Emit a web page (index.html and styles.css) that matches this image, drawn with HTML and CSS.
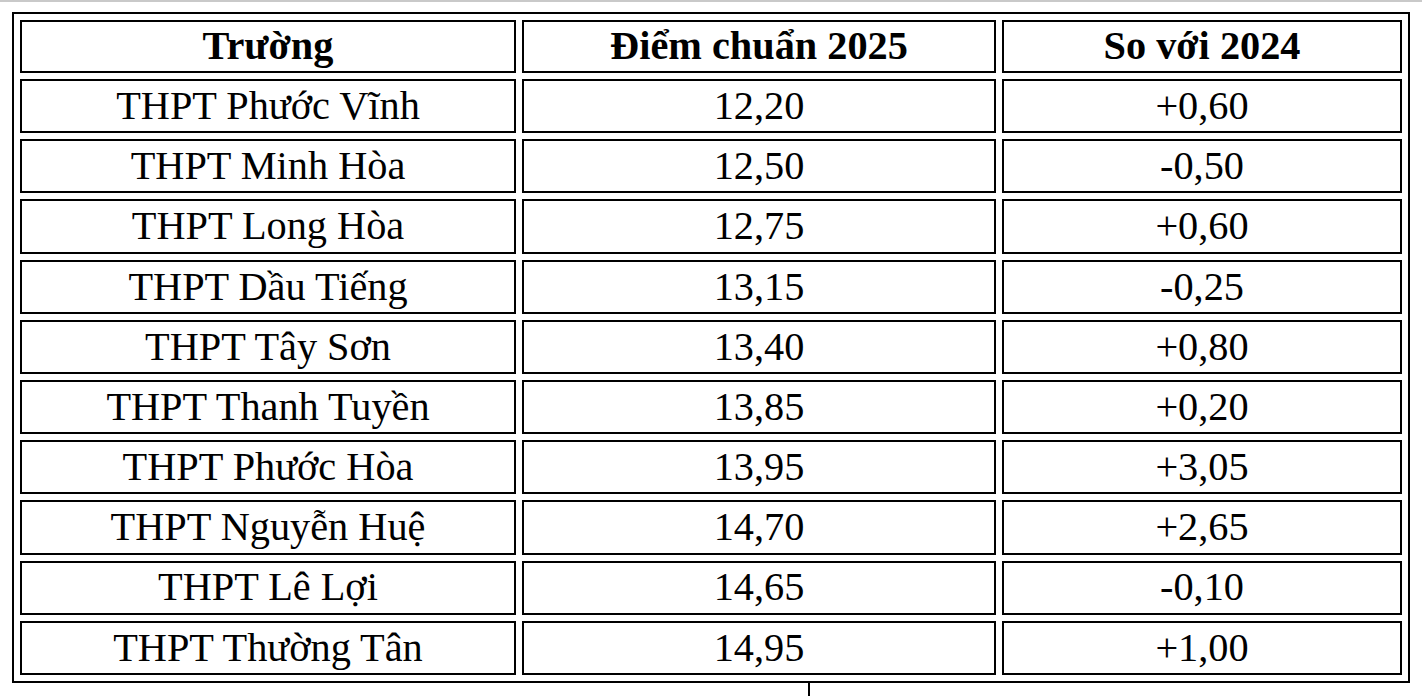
FILE: index.html
```html
<!DOCTYPE html>
<html lang="vi">
<head>
<meta charset="utf-8">
<title>Điểm chuẩn 2025</title>
<link rel="stylesheet" href="styles.css">
</head>
<body>
<div class="topline"></div>
<table class="scores">
  <thead>
    <tr class="head">
      <th class="c1">Trường</th>
      <th class="c2">Điểm chuẩn 2025</th>
      <th class="c3">So với 2024</th>
    </tr>
  </thead>
  <tbody>
    <tr><td>THPT Phước Vĩnh</td><td>12,20</td><td>+0,60</td></tr>
    <tr><td>THPT Minh Hòa</td><td>12,50</td><td>-0,50</td></tr>
    <tr><td>THPT Long Hòa</td><td>12,75</td><td>+0,60</td></tr>
    <tr><td>THPT Dầu Tiếng</td><td>13,15</td><td>-0,25</td></tr>
    <tr><td>THPT Tây Sơn</td><td>13,40</td><td>+0,80</td></tr>
    <tr><td>THPT Thanh Tuyền</td><td>13,85</td><td>+0,20</td></tr>
    <tr><td>THPT Phước Hòa</td><td>13,95</td><td>+3,05</td></tr>
    <tr><td>THPT Nguyễn Huệ</td><td>14,70</td><td>+2,65</td></tr>
    <tr><td>THPT Lê Lợi</td><td>14,65</td><td>-0,10</td></tr>
    <tr><td>THPT Thường Tân</td><td>14,95</td><td>+1,00</td></tr>
  </tbody>
</table>
<div class="stub"></div>
</body>
</html>
```

FILE: styles.css
```css
html, body {
  margin: 0;
  padding: 0;
  background: #ffffff;
}

body {
  width: 1422px;
  height: 696px;
  overflow: hidden;
  font-family: "Liberation Serif", "Times New Roman", serif;
  color: #000000;
}

.topline {
  height: 2px;
  background: #c9c9c9;
  margin-bottom: 10px;
}

.scores {
  margin-left: 12px;
  width: 1398px;
  border: 2px solid #000000;
  border-collapse: separate;
  border-spacing: 6px;
  table-layout: fixed;
}

.scores th,
.scores td {
  border: 2px solid #000000;
  padding: 0;
  text-align: center;
  vertical-align: middle;
  font-size: 40.3px;
  line-height: 1;
  box-sizing: border-box;
}

.scores th {
  font-weight: bold;
  height: 53px;
}

.scores td {
  font-weight: normal;
  height: 54.2px;
}

.c1 { width: 496px; }
.c2 { width: 474px; }
.c3 { width: 400px; }

.stub {
  margin-left: 808px;
  width: 0;
  height: 20px;
  border-left: 2px solid #000000;
}
```
